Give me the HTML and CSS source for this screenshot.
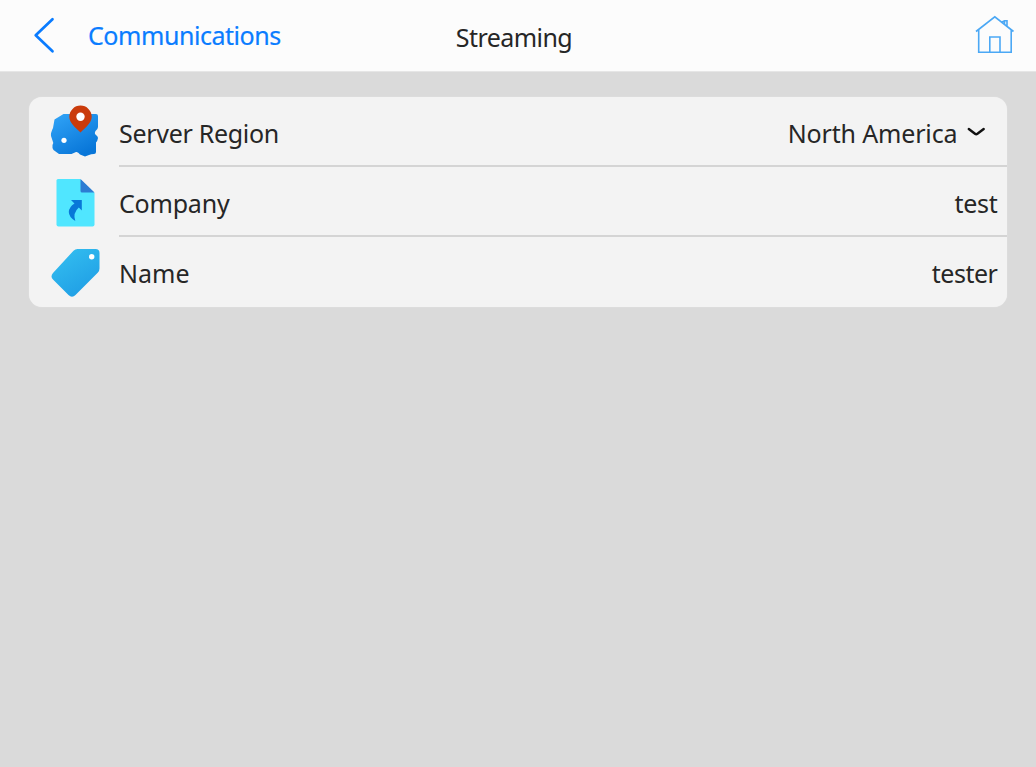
FILE: index.html
```html
<!DOCTYPE html>
<html lang="en">
<head>
    <meta charset="utf-8">
    <title>Streaming</title>
    <link rel="stylesheet" href="styles.css">
</head>
<body>
    <header class="topbar">
        <a class="back" href="#">
            <svg class="back-arrow" width="24" height="38" viewBox="0 0 24 38">
                <path d="M21.500 3.300 L4.700 19.300 L21.500 35.300" />
            </svg>
            <span class="back-label">Communications</span>
        </a>
        <h1 class="title">Streaming</h1>
        <a class="home" href="#" aria-label="Home">
            <svg width="40" height="40" viewBox="0 0 40 40">
                <path d="M1 16.500 L19.800 1.800 L38.500 16.500 M3.700 15 V37.300 H36.200 V15 M14.800 37.300 V22 H25 V37.300 M27 7 L29.500 5.800 H32 V11 M29.500 6 V9" />
            </svg>
        </a>
    </header>

    <main class="card">
        <div class="row">
            <svg class="icon" width="50" height="54" viewBox="0 0 50 54">
                <defs>
                    <linearGradient id="map" x1="0" y1="0" x2="0.600" y2="1">
                        <stop offset="0" stop-color="#32a5f8" />
                        <stop offset="1" stop-color="#0876d8" />
                    </linearGradient>
                    <linearGradient id="tag" x1="0" y1="0" x2="0.600" y2="1">
                        <stop offset="0" stop-color="#35c1f1" />
                        <stop offset="1" stop-color="#209fe5" />
                    </linearGradient>
                </defs>
                <path fill="url(#map)" d="M13.500 9 H46 Q48 9 48 11 V22 Q48 24 45.500 26 Q44 28.500 46 30 Q48 31.500 48 33 Q47.500 36 46 37.500 V47 Q46 49 44 49 Q41 49 39 50 L35 51.500 L30 49.500 Q28 46.500 26 47 L21.500 49 H9 L3.500 45 Q2 43 2.500 40 Q4 38 2.500 35.500 L1 31 Q0.500 28 3 23 L4.500 14.500 Z" />
                <circle cx="14" cy="35.300" r="2.600" fill="#fff" />
                <path fill="#ca3b0b" d="M30.500 27.500 C26 23 19.300 18 19.300 11.800 A11.200 11.200 0 0 1 41.700 11.800 C41.700 18 35 23 30.500 27.500 Z" />
                <circle cx="30.500" cy="11.800" r="4.200" fill="#fff" />
            </svg>
            <div class="row-body">
                <span class="label region-label">Server Region</span>
                <span class="value region">North America</span>
                <svg class="chevron" width="20" height="12" viewBox="0 0 20 12">
                    <path d="M2.800 3 L9 7.800 Q10.200 8.700 11.400 7.800 L17.700 3" />
                </svg>
            </div>
        </div>
        <div class="row">
            <svg class="icon" width="50" height="54" viewBox="0 0 50 54">
                <path fill="#50e6ff" d="M8 4 H30 L44.500 18 V49.500 Q44.500 51.500 42.500 51.500 H8.500 Q6.500 51.500 6.500 49.500 V5.500 Q6.500 4 8 4 Z" />
                <path fill="#2c7cd3" d="M30.500 4 L44.500 17.500 H32 Q30.500 17.500 30.500 16 Z" />
                <path fill="#0877d8" d="M21 25 H31.800 V35.500 L28.800 32.500 Q22.500 38 25.300 46 Q18.800 42 18.800 37 Q19 32 24.500 28.500 Z" />
            </svg>
            <div class="row-body">
                <span class="label company-label">Company</span>
                <span class="value test">test</span>
            </div>
        </div>
        <div class="row">
            <svg class="icon" width="50" height="54" viewBox="0 0 50 54">
                <path fill="url(#tag)" d="M27.500 4 H45.500 Q49.500 4 49.500 8 V23.500 Q49.500 26 47.700 27.800 L25.500 50 Q22 53.500 18.500 50 L3 34.500 Q0 31.500 3 28 L23.500 5.700 Q25.200 4 27.500 4 Z" />
                <circle cx="41.700" cy="11.700" r="2.700" fill="#fff" />
            </svg>
            <div class="row-body">
                <span class="label name-label">Name</span>
                <span class="value tester">tester</span>
            </div>
        </div>
    </main>
</body>
</html>
```
FILE: styles.css
```css
* { box-sizing: border-box; }
body {
    margin: 0;
    min-height: 767px;
    background: #dadada;
    color: #262626;
    font: 25px/34px "Noto Sans", sans-serif;
}
.topbar {
    display: grid;
    grid-template-columns: 1fr auto 1fr;
    align-items: center;
    height: 72px;
    padding: 0 21px 2px 31px;
    background: #fcfcfc;
    border-bottom: 1px solid #e6e6e6;
}
.back {
    display: flex;
    align-items: center;
    color: #0a7cff;
    text-decoration: none;
}
.back-arrow path {
    fill: none;
    stroke: #0a7cff;
    stroke-width: 2.7;
    stroke-linecap: round;
    stroke-linejoin: round;
}
.back-label {
    margin-left: 33px;
    letter-spacing: -0.45px;
    -webkit-text-stroke: 0.2px #0a7cff;
}
.title {
    margin: 5px 18px 0 0;
    font-size: 25px;
    font-weight: 400;
    letter-spacing: -0.55px;
}
.home {
    justify-self: end;
    height: 40px;
}
.home svg { display: block; }
.home path {
    fill: none;
    stroke: #4ba8f5;
    stroke-width: 1.6;
}
.card {
    width: 978px;
    margin: 25px 0 0 29.4px;
    border-radius: 13px;
    background: #f3f3f3;
    box-shadow: 0 0 1px #eee;
}
.row {
    display: flex;
    height: 70px;
    padding-left: 20.6px;
}
.icon {
    flex: none;
    margin: 8px 19px 0 0;
}
.row-body {
    flex: 1;
    display: flex;
    align-items: center;
    padding: 3px 10px 0 0;
    border-bottom: 2px solid #d4d4d4;
}
.row:last-child .row-body { border-bottom-color: transparent; }
.value { margin-left: auto; }
.region-label { letter-spacing: -0.3px; }
.company-label { letter-spacing: -0.2px; }
.region { letter-spacing: -0.15px; }
.test { letter-spacing: -0.3px; }
.tester { letter-spacing: -0.5px; }
.chevron { margin: 0 11px 1px 9px; }
.chevron path {
    fill: none;
    stroke: #111;
    stroke-width: 2.4;
    stroke-linecap: round;
}
```
